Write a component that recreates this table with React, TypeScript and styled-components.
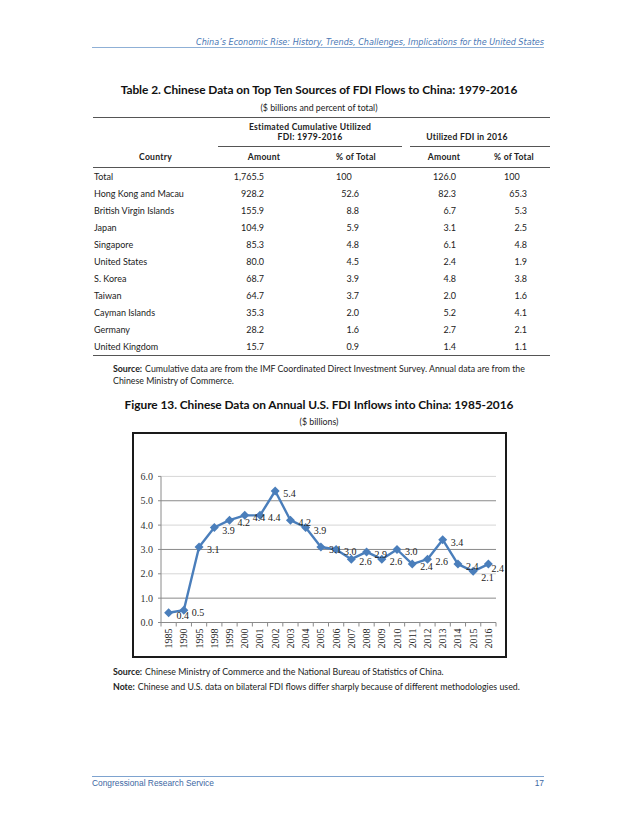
import React from "react";
import styled, { createGlobalStyle } from "styled-components";

const GlobalStyle = createGlobalStyle`
  html, body { margin: 0; padding: 0; background: #fff; }
  body { font-family: Lato, "Open Sans", sans-serif; color: #1a1a1a; }
`;

const Page = styled.div`
  width: 638px;
  height: 826px;
  display: flex;
  flex-direction: column;
  box-sizing: border-box;
  padding: 38px 0 0 0;
`;

const RunningHead = styled.div`
  margin-left: 92px;
  width: 452px;
  font-family: "DejaVu Sans", Verdana, sans-serif;
  font-style: italic;
  font-size: 8.1px;
  line-height: 9px;
  color: #4a78b5;
  text-align: right;
  border-bottom: 1px solid #8fb0d6;
`;

const Title = styled.div<{ $mt: number }>`
  margin-top: ${(p) => p.$mt}px;
  text-align: center;
  font-family: Lato, sans-serif;
  font-weight: 700;
  font-size: 11.9px;
  line-height: 16px;
  color: #111;
  letter-spacing: -0.05px;
`;

const Subtitle = styled.div<{ $mt: number }>`
  margin-top: ${(p) => p.$mt}px;
  text-align: center;
  font-size: 8.8px;
  line-height: 12px;
  color: #222;
`;

const Table = styled.div`
  margin-top: 3px;
  margin-left: 93px;
  width: 457px;
  border-top: 1px solid #555;
  border-bottom: 1px solid #555;
`;

const cols = "125px 92px 92px 8px 68px 72px";

const HeadTop = styled.div`
  display: grid;
  grid-template-columns: ${cols};
  align-items: end;
`;

const GroupCell = styled.div<{ $col: string; $pr?: number }>`
  grid-column: ${(p) => p.$col};
  text-align: center;
  font-weight: 700;
  font-size: 8.6px;
  line-height: 10px;
  letter-spacing: 0.25px;
  color: #222;
  padding: 4px ${(p) => p.$pr || 0}px 4px 0;
  border-bottom: 1px solid #555;
`;

const HeadBottom = styled.div`
  display: grid;
  grid-template-columns: ${cols};
  border-bottom: 1px solid #555;
`;

const ColHead = styled.div<{ $col?: string }>`
  ${(p) => (p.$col ? `grid-column: ${p.$col};` : "")}
  text-align: center;
  font-weight: 700;
  font-size: 8.6px;
  line-height: 11px;
  letter-spacing: 0.25px;
  color: #222;
  padding: 5px 0 4px;
`;

const Row = styled.div`
  display: grid;
  grid-template-columns: ${cols};
  height: 17px;
  align-items: center;
  font-size: 9px;
  color: #222;
`;

const CountryCell = styled.div`
  padding-left: 1px;
`;

const NumCell = styled.div<{ $pr: number; $col?: string }>`
  ${(p) => (p.$col ? `grid-column: ${p.$col};` : "")}
  text-align: right;
  padding-right: ${(p) => p.$pr}px;
`;

const Hidden = styled.span`
  visibility: hidden;
`;

const Notes = styled.div<{ $mt: number }>`
  margin-top: ${(p) => p.$mt}px;
  margin-left: 113px;
  width: 430px;
  font-size: 8.8px;
  line-height: 12px;
  color: #222;
  display: flex;
  flex-direction: column;
  gap: 3px;
`;

const NoteLine = styled.div``;

const Label = styled.span`
  font-weight: 700;
  margin-right: 3px;
`;

const ChartFrame = styled.div`
  margin-top: 4px;
  margin-left: 132px;
  width: 375px;
  height: 226px;
  box-sizing: border-box;
  border: 2px solid #1a1a1a;
  display: flex;
`;

const RunningFoot = styled.div`
  margin-top: auto;
  margin-bottom: 38px;
  margin-left: 92px;
  width: 452px;
  border-top: 1px solid #7ea3cf;
  padding-top: 1px;
  display: flex;
  justify-content: space-between;
  font-family: "Liberation Sans", Arial, sans-serif;
  font-size: 8.4px;
  line-height: 10px;
  color: #3d68a3;
`;

type R = [string, string, string, string, string];
const rows: R[] = [
  ["Total", "1,765.5", "100", "126.0", "100"],
  ["Hong Kong and Macau", "928.2", "52.6", "82.3", "65.3"],
  ["British Virgin Islands", "155.9", "8.8", "6.7", "5.3"],
  ["Japan", "104.9", "5.9", "3.1", "2.5"],
  ["Singapore", "85.3", "4.8", "6.1", "4.8"],
  ["United States", "80.0", "4.5", "2.4", "1.9"],
  ["S. Korea", "68.7", "3.9", "4.8", "3.8"],
  ["Taiwan", "64.7", "3.7", "2.0", "1.6"],
  ["Cayman Islands", "35.3", "2.0", "5.2", "4.1"],
  ["Germany", "28.2", "1.6", "2.7", "2.1"],
  ["United Kingdom", "15.7", "0.9", "1.4", "1.1"],
];

const Dec = ({ v }: { v: string }) =>
  v.includes(".") ? <>{v}</> : <>{v}<Hidden>.0</Hidden></>;

const years = [
  "1985", "1990", "1995", "1998", "1999", "2000", "2001", "2002", "2003", "2004", "2005",
  "2006", "2007", "2008", "2009", "2010", "2011", "2012", "2013", "2014", "2015", "2016",
];
const values = [0.4, 0.5, 3.1, 3.9, 4.2, 4.4, 4.4, 5.4, 4.2, 3.9, 3.1, 3.0, 2.6, 2.9, 2.6, 3.0, 2.4, 2.6, 3.4, 2.4, 2.1, 2.4];

const X0 = 161;
const X1 = 496;
const Y0 = 622.5;
const UNIT = 24.35;
const step = (X1 - X0) / years.length;
const cx = (i: number) => X0 + step * (i + 0.5);
const cy = (v: number) => Y0 - v * UNIT;

const labelOffset = (i: number): [number, number] => {
  if (i === years.length - 1) return [3, 8];
  if (i === years.length - 2) return [8, 10];
  return [8, 6];
};

const Chart = () => {
  const pts = values.map((v, i) => `${cx(i).toFixed(1)},${cy(v).toFixed(1)}`).join(" ");
  return (
    <svg width={371} height={222} viewBox="134 434 371 222">
      {[1, 2, 3, 4, 5, 6].map((g) => (
        <line
          key={g}
          x1={X0}
          x2={X1}
          y1={cy(g)}
          y2={cy(g)}
          stroke={g % 2 ? "#8a8a8a" : "#d6d6d6"}
          strokeWidth={1}
        />
      ))}
      <line x1={X0} x2={X0} y1={cy(6)} y2={Y0} stroke="#8a8a8a" />
      <line x1={X0} x2={X1} y1={Y0} y2={Y0} stroke="#8a8a8a" />
      {[0, 1, 2, 3, 4, 5, 6].map((g) => (
        <g key={g}>
          <line x1={X0 - 3} x2={X0} y1={cy(g)} y2={cy(g)} stroke="#8a8a8a" />
          <text
            x={153}
            y={cy(g) + 3.5}
            textAnchor="end"
            fontFamily="'Liberation Serif', serif"
            fontSize={10}
            fill="#333"
          >
            {g.toFixed(1)}
          </text>
        </g>
      ))}
      {years.map((y, i) => (
        <g key={y}>
          <line x1={X0 + step * i} x2={X0 + step * i} y1={Y0} y2={Y0 + 4} stroke="#8a8a8a" />
          <text
            transform={`translate(${cx(i) + 3.5} ${Y0 + 6}) rotate(-90)`}
            textAnchor="end"
            fontFamily="'Liberation Serif', serif"
            fontSize={10}
            fill="#222"
          >
            {y}
          </text>
        </g>
      ))}
      <line x1={X1} x2={X1} y1={Y0} y2={Y0 + 4} stroke="#8a8a8a" />
      <polyline points={pts} fill="none" stroke="#4a7ebb" strokeWidth={2.4} strokeLinejoin="round" />
      {values.map((v, i) => (
        <polygon
          key={i}
          points={`${cx(i)},${cy(v) - 4.5} ${cx(i) + 4.5},${cy(v)} ${cx(i)},${cy(v) + 4.5} ${cx(i) - 4.5},${cy(v)}`}
          fill="#4a7ebb"
        />
      ))}
      {values.map((v, i) => {
        const [dx, dy] = labelOffset(i);
        return (
          <text
            key={i}
            x={cx(i) + dx}
            y={cy(v) + dy}
            fontFamily="'Liberation Serif', serif"
            fontSize={10}
            fill="#222"
          >
            {v.toFixed(1)}
          </text>
        );
      })}
    </svg>
  );
};

export default function App() {
  return (
    <>
      <GlobalStyle />
      <Page>
        <RunningHead>
          China’s Economic Rise: History, Trends, Challenges, Implications for the United States
        </RunningHead>
        <Title $mt={34}>Table 2. Chinese Data on Top Ten Sources of FDI Flows to China: 1979-2016</Title>
        <Subtitle $mt={4}>($ billions and percent of total)</Subtitle>
        <Table>
          <HeadTop>
            <GroupCell $col="2 / 4">
              Estimated Cumulative Utilized
              <br />
              FDI: 1979-2016
            </GroupCell>
            <GroupCell $col="5 / 7" $pr={26}>
              Utilized FDI in 2016
            </GroupCell>
          </HeadTop>
          <HeadBottom>
            <ColHead>Country</ColHead>
            <ColHead>Amount</ColHead>
            <ColHead>% of Total</ColHead>
            <ColHead $col="5">Amount</ColHead>
            <ColHead>% of Total</ColHead>
          </HeadBottom>
          {rows.map((r) => (
            <Row key={r[0]}>
              <CountryCell>{r[0]}</CountryCell>
              <NumCell $pr={46}><Dec v={r[1]} /></NumCell>
              <NumCell $pr={43}><Dec v={r[2]} /></NumCell>
              <NumCell $pr={22} $col="5"><Dec v={r[3]} /></NumCell>
              <NumCell $pr={23}><Dec v={r[4]} /></NumCell>
            </Row>
          ))}
        </Table>
        <Notes $mt={7}>
          <NoteLine>
            <Label>Source:</Label>Cumulative data are from the IMF Coordinated Direct Investment Survey. Annual data are from the Chinese Ministry of Commerce.
          </NoteLine>
        </Notes>
        <Title $mt={10}>Figure 13. Chinese Data on Annual U.S. FDI Inflows into China: 1985-2016</Title>
        <Subtitle $mt={3}>($ billions)</Subtitle>
        <ChartFrame>
          <Chart />
        </ChartFrame>
        <Notes $mt={8}>
          <NoteLine>
            <Label>Source:</Label>Chinese Ministry of Commerce and the National Bureau of Statistics of China.
          </NoteLine>
          <NoteLine>
            <Label>Note:</Label>Chinese and U.S. data on bilateral FDI flows differ sharply because of different methodologies used.
          </NoteLine>
        </Notes>
        <RunningFoot>
          <span>Congressional Research Service</span>
          <span>17</span>
        </RunningFoot>
      </Page>
    </>
  );
}
